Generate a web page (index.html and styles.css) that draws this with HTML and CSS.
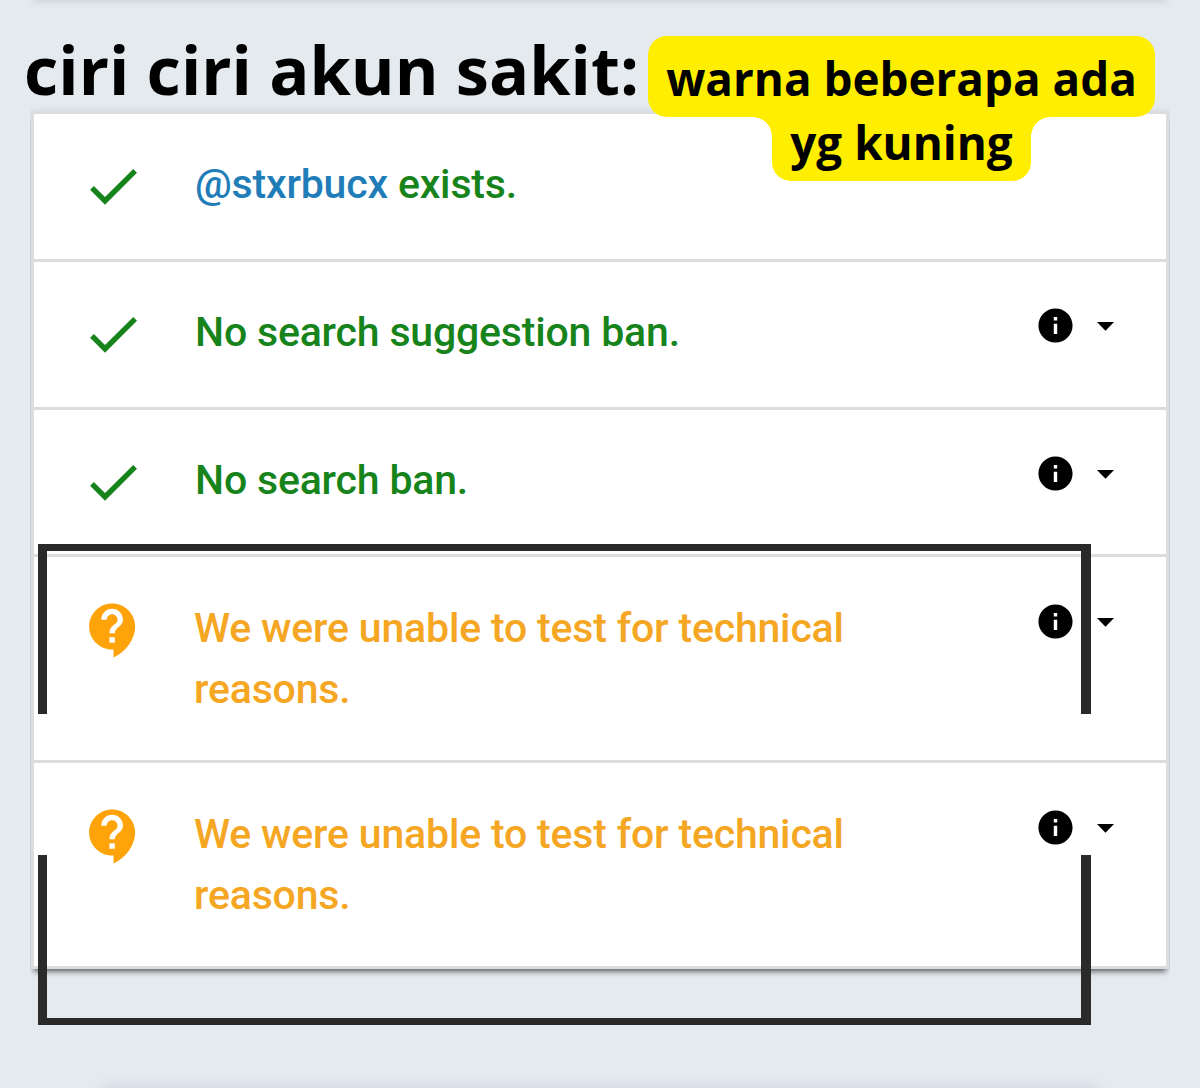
FILE: index.html
```
<!DOCTYPE html>
<html lang="id">
<head>
    <meta charset="UTF-8">
    <meta name="viewport" content="width=device-width, initial-scale=1.0">
    <title>ciri ciri akun sakit</title>
    <link rel="stylesheet" href="styles.css">
</head>
<body>
    <!-- icons -->
    <svg class="sprite" width="0" height="0">
        <symbol id="check" viewBox="0 0 24 24"><path d="M9 16.17 4.83 12l-1.42 1.41L9 19 21 7l-1.41-1.41z"/></symbol>
        <symbol id="support" viewBox="0 0 24 24"><path d="M11.5 2C6.81 2 3 5.81 3 10.5S6.81 19 11.5 19h.5v3c4.86-2.34 8-7 8-11.5C20 5.81 16.19 2 11.5 2zm1 14.5h-2v-2h2v2zm0-3.5h-2c0-3.25 3-3 3-5 0-1.1-.9-2-2-2s-2 .9-2 2h-2c0-2.21 1.79-4 4-4s4 1.79 4 4c0 2.5-3 2.75-3 5z"/></symbol>
        <symbol id="info" viewBox="0 0 24 24"><path d="M12 2C6.48 2 2 6.48 2 12s4.48 10 10 10 10-4.48 10-10S17.52 2 12 2zm1 15h-2v-6h2v6zm0-8h-2V7h2v2z"/></symbol>
        <symbol id="arrow" viewBox="0 0 24 24"><path d="M7 10l5 5 5-5z"/></symbol>
    </svg>

    <header class="header">
        <h1>ciri ciri akun sakit:</h1>
        <div class="label">
            <span class="label-line">warna beberapa ada</span>
            <span class="label-line second">yg kuning</span>
        </div>
    </header>

    <main class="results">
        <div class="row ok">
            <svg class="status"><use href="#check"/></svg>
            <p><a class="handle">@stxrbucx</a> exists.</p>
        </div>
        <div class="row ok">
            <svg class="status"><use href="#check"/></svg>
            <p>No search suggestion ban.</p>
            <div class="more"><svg><use href="#info"/></svg><svg><use href="#arrow"/></svg></div>
        </div>
        <div class="row ok">
            <svg class="status"><use href="#check"/></svg>
            <p>No search ban.</p>
            <div class="more"><svg><use href="#info"/></svg><svg><use href="#arrow"/></svg></div>
        </div>
        <div class="row warn">
            <svg class="status"><use href="#support"/></svg>
            <p>We were unable to test for technical reasons.</p>
            <div class="more"><svg><use href="#info"/></svg><svg><use href="#arrow"/></svg></div>
        </div>
        <div class="row warn">
            <svg class="status"><use href="#support"/></svg>
            <p>We were unable to test for technical reasons.</p>
            <div class="more"><svg><use href="#info"/></svg><svg><use href="#arrow"/></svg></div>
        </div>
    </main>

    <!-- bracket around the yellow rows -->
    <div class="bracket top"></div>
    <div class="bracket bottom"></div>
</body>
</html>
```
FILE: styles.css
```
* {
    margin: 0;
    padding: 0;
    box-sizing: border-box;
}

body {
    position: relative;
    height: 1088px;
    overflow: hidden;
    background: #e5eaef;
    font-family: Roboto, sans-serif;
}

/* shadows of the neighbouring cards */
body::before,
body::after {
    content: "";
    position: absolute;
    height: 20px;
    background: #d3d7e1;
}

body::before {
    top: -20px;
    left: 34px;
    right: 34px;
    box-shadow: 0 0 7px 1px #c9cddb;
}

body::after {
    bottom: -21px;
    left: 104px;
    right: 104px;
    box-shadow: 0 0 14px 1px #c9cddb;
}

.sprite {
    position: absolute;
}

.header {
    position: relative;
    z-index: 2;
    display: flex;
    align-items: flex-start;
    height: 111px;
    padding-top: 36px;
    font-family: "Open Sans", sans-serif;
    color: #000;
}

h1 {
    width: 648px;
    padding-left: 24px;
    font-size: 66.7px;
    font-weight: 700;
    line-height: 68px;
    white-space: nowrap;
}

.label {
    display: flex;
    flex-direction: column;
    align-items: center;
    width: 507px;
    font-size: 45.8px;
    font-weight: 700;
    white-space: nowrap;
}

.label-line {
    width: 100%;
    height: 81px;
    border-radius: 19px;
    background: #ffee00;
    line-height: 84px;
    text-align: center;
}

.label-line.second {
    position: relative;
    width: 259px;
    height: 64px;
    border-radius: 0 0 19px 19px;
    line-height: 50px;
}

/* inner corners where the two lines meet */
.second::before,
.second::after {
    content: "";
    position: absolute;
    top: 0;
    width: 19px;
    height: 19px;
}

.second::before {
    right: 100%;
    background: radial-gradient(circle at 0 100%, transparent 18.5px, #ffee00 19px);
}

.second::after {
    left: 100%;
    background: radial-gradient(circle at 100% 100%, transparent 18.5px, #ffee00 19px);
}

.results {
    width: 1138px;
    margin-left: 31px;
    border: 3px solid #dcdddf;
    background: #fff;
    box-shadow: 0 5px 6px -3px rgba(0, 0, 0, 0.65), 0 0 8px rgba(100, 100, 130, 0.12);
    clip-path: inset(-12px -1px -20px -1px);
}

.row {
    display: flex;
    align-items: flex-start;
    height: 147.8px;
    padding: 40px 40px 0 48px;
    border-bottom: 3px solid #dcdddf;
    font-size: 41px;
    font-weight: 500;
    line-height: 61.5px;
    letter-spacing: -0.18px;
}

.status {
    flex: none;
    width: 64px;
    height: 64px;
    margin-left: -1px;
    fill: currentColor;
}

.row p {
    width: 700px;
    margin-left: 50px;
}

.ok {
    color: #17831b;
}

.warn {
    height: 206px;
    padding-top: 40.5px;
    color: #f5a623;
}

.row:last-child {
    height: 203px;
    border-bottom: 0;
}

.warn .status {
    width: 65px;
    height: 65px;
    fill: #ffa30a;
}

.warn p {
    margin-left: 48px;
}

.handle {
    color: #217db8;
}

.more {
    display: flex;
    gap: 9px;
    margin: 3px 0 0 auto;
}

.more svg {
    width: 41px;
    height: 41px;
    fill: #000;
}

.bracket {
    position: absolute;
    left: 38px;
    width: 1053px;
    height: 170px;
    border: solid #2b2a2b;
}

.bracket.top {
    top: 544px;
    border-width: 7px 10px 0 9px;
}

.bracket.bottom {
    top: 855px;
    border-width: 0 10px 7px 9px;
}
```
